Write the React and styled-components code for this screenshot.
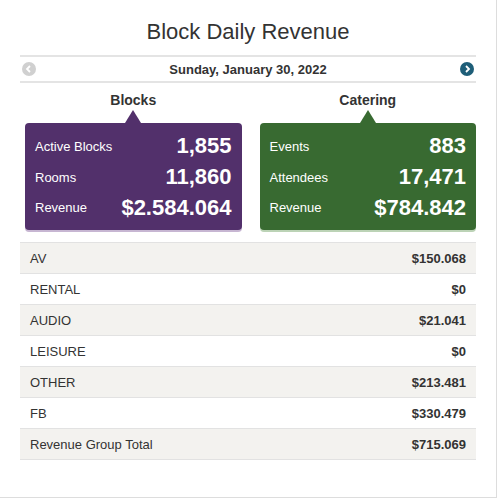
import React from "react";
import styled, { createGlobalStyle } from "styled-components";

const Global = createGlobalStyle`
  html, body { margin: 0; padding: 0; background: #fff; }
  body { font-family: "Liberation Sans", Arial, sans-serif; color: #333; }
`;

const Panel = styled.div`
  width: 497px; height: 498px; box-sizing: border-box;
  border-right: 1px solid #ddd; border-bottom: 1px solid #ddd;
  padding: 0 20px;
`;
const Title = styled.h1`
  margin: 0; padding-top: 19px; height: 36px;
  text-align: center; font-weight: normal; font-size: 22px; color: #333;
`;
const DateBar = styled.div`
  border-top: 2px solid #e4e4e4; border-bottom: 2px solid #e4e4e4;
  height: 24px; display: flex; align-items: center; justify-content: space-between;
  padding: 0 2px;
  font-weight: bold; font-size: 13px; color: #333;
`;
const Circle = styled.span`
  width: 14px; height: 14px; border-radius: 50%; background: ${p => p.$c};
  display: flex; align-items: center; justify-content: center;
`;
const Cards = styled.div`
  display: grid; grid-template-columns: 1fr 1fr; gap: 18px; padding: 0 0 0 5px; margin-top: 9px;
`;
const Col = styled.div`display: flex; flex-direction: column; align-items: center;`;
const ColHead = styled.div`font-weight: bold; font-size: 14px; color: #333; height: 17px;`;
const Tri = styled.div`
  width: 0; height: 0; border-left: 8px solid transparent; border-right: 8px solid transparent;
  border-bottom: 13px solid ${p => p.$c}; margin-top: 1px;
`;
const Card = styled.div`
  align-self: stretch; background: ${p => p.$c}; border-radius: 4px;
  padding: 8px 10px 7px 10px; color: #fff; height: 92px;
  display: flex; flex-direction: column; justify-content: space-between;
  box-shadow: 0 2px 0 ${p => p.$s};
`;
const Stat = styled.div`display: flex; justify-content: space-between; align-items: center; height: 31px;`;
const StatLabel = styled.span`font-size: 13px;`;
const StatVal = styled.span`font-size: 22px; font-weight: bold;`;
const Table = styled.div`margin-top: 12px; border-top: 1px solid #e2e2e2;`;
const Row = styled.div`
  display: flex; justify-content: space-between; align-items: center;
  height: 30px; border-bottom: 1px solid #e2e2e2; padding: 0 10px;
  background: ${p => p.$alt ? "#f3f2ef" : "#fff"}; font-size: 13px; color: #333;
`;
const Amt = styled.span`font-weight: bold;`;

const rows = [
  ["AV", "$150.068"], ["RENTAL", "$0"], ["AUDIO", "$21.041"], ["LEISURE", "$0"],
  ["OTHER", "$213.481"], ["FB", "$330.479"], ["Revenue Group Total", "$715.069"],
];

const Chev = ({ left }) => (
  <svg width="8" height="8" viewBox="0 0 8 8">
    <path d={left ? "M5 1 L2 4 L5 7" : "M3 1 L6 4 L3 7"} stroke="#fff" strokeWidth="1.8" fill="none" />
  </svg>
);

export default function App() {
  return (
    <Panel>
      <Global />
      <Title>Block Daily Revenue</Title>
      <DateBar>
        <Circle $c="#d0d0d0"><Chev left /></Circle>
        <span>Sunday, January 30, 2022</span>
        <Circle $c="#1e5e78"><Chev /></Circle>
      </DateBar>
      <Cards>
        <Col>
          <ColHead>Blocks</ColHead>
          <Tri $c="#52306b" />
          <Card $c="#52306b" $s="#c7b6d2">
            <Stat><StatLabel>Active Blocks</StatLabel><StatVal>1,855</StatVal></Stat>
            <Stat><StatLabel>Rooms</StatLabel><StatVal>11,860</StatVal></Stat>
            <Stat><StatLabel>Revenue</StatLabel><StatVal>$2.584.064</StatVal></Stat>
          </Card>
        </Col>
        <Col>
          <ColHead>Catering</ColHead>
          <Tri $c="#386a31" />
          <Card $c="#386a31" $s="#bcd3b6">
            <Stat><StatLabel>Events</StatLabel><StatVal>883</StatVal></Stat>
            <Stat><StatLabel>Attendees</StatLabel><StatVal>17,471</StatVal></Stat>
            <Stat><StatLabel>Revenue</StatLabel><StatVal>$784.842</StatVal></Stat>
          </Card>
        </Col>
      </Cards>
      <Table>
        {rows.map(([l, v], i) => (
          <Row key={l} $alt={i % 2 === 0}><span>{l}</span><Amt>{v}</Amt></Row>
        ))}
      </Table>
    </Panel>
  );
}
